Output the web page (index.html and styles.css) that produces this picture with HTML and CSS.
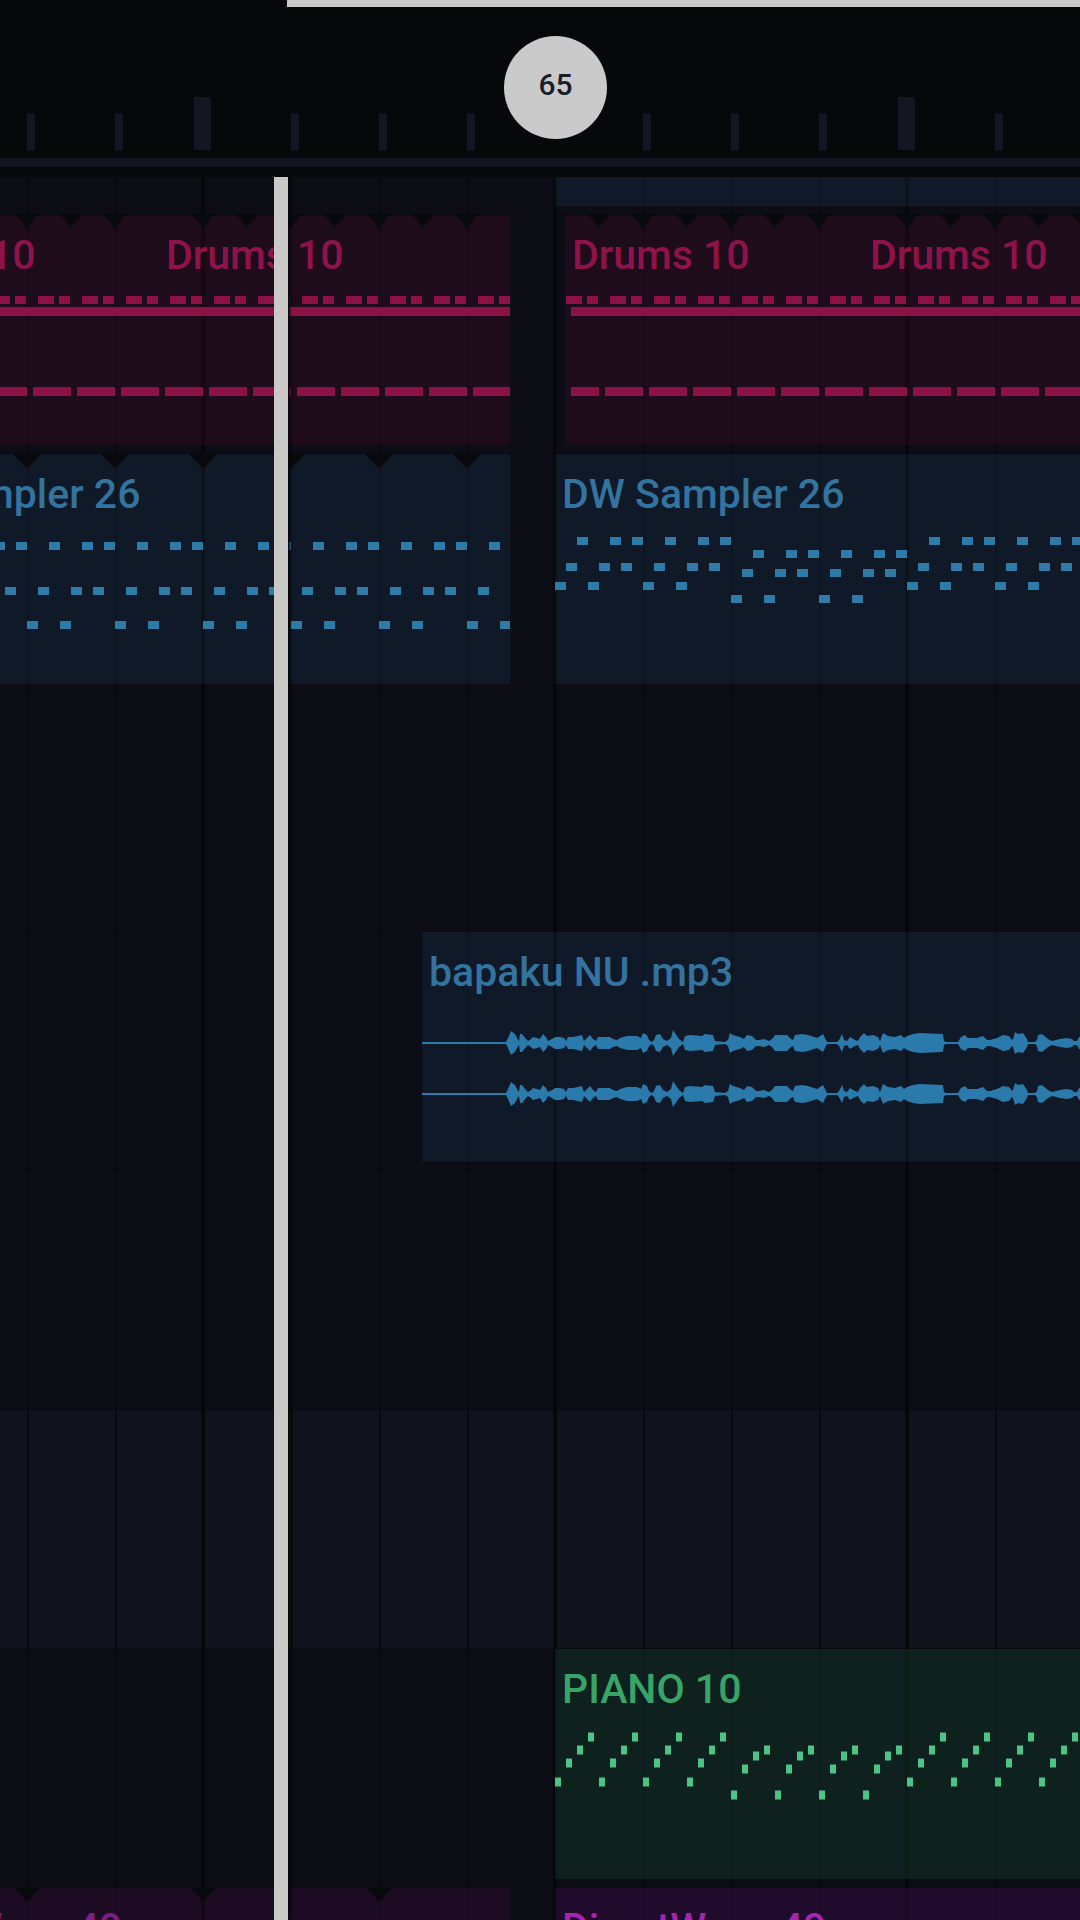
FILE: index.html
```html
<!DOCTYPE html>
<html lang="en">
<head>
    <meta charset="UTF-8">
    <meta name="viewport" content="width=device-width, initial-scale=1.0">
    <title>Playlist</title>

    <link rel="stylesheet" href="styles.css">
</head>
<body>
    <!-- shared note patterns, one beat = 88px, one bar = 352px -->
    <svg class="defs" width="0" height="0" aria-hidden="true">
        <defs>
            <!-- every second bar has a number instead of a tick -->
            <pattern id="tick" x="-149" width="704" height="53" patternUnits="userSpaceOnUse">
                <path class="tick" d="M88 17h8v36h-8zM176 17h8v36h-8zM264 17h8v36h-8zM343 0h17v53h-17zM440 17h8v36h-8zM528 17h8v36h-8zM616 17h8v36h-8z"/>
            </pattern>

            <pattern id="notch-44" x="-22" width="44" height="230" patternUnits="userSpaceOnUse">
                <path class="notch" d="M8 0h28q-6 1-10 8l-4 5-4-5q-4-7-10-8z"/>
            </pattern>
            <pattern id="notch-88" x="-44" width="88" height="230" patternUnits="userSpaceOnUse">
                <path class="notch" d="M30 0h28L44 15z"/>
            </pattern>
            <pattern id="notch-176" x="-88" width="176" height="230" patternUnits="userSpaceOnUse">
                <path class="notch" d="M75 0h26L88 14z"/>
            </pattern>

            <pattern id="drums" width="44" height="230" patternUnits="userSpaceOnUse">
                <path class="fill-drums" d="M11 81h16v8H11zM32 81h11v8H32zM6 172h38v9H6z"/>
            </pattern>
            <pattern id="sampler-a" width="88" height="230" patternUnits="userSpaceOnUse">
                <path class="line-sampler" d="M22 92h11M55 92h11M77 92h11M11 137h11M44 137h11M66 137h11M0 171h11M33 171h11"/>
            </pattern>
            <pattern id="sampler-b" width="352" height="230" patternUnits="userSpaceOnUse">
                <path class="line-sampler" d="M22 87h11M55 87h11M77 87h11M110 87h11M143 87h11M165 87h11
                    M11 113h11M44 113h11M66 113h11M99 113h11M132 113h11M154 113h11
                    M0 132h11M33 132h11M88 132h11M121 132h11
                    M198 100h11M231 100h11M253 100h11M286 100h11M319 100h11M341 100h11
                    M187 119h11M220 119h11M242 119h11M275 119h11M308 119h11M330 119h11
                    M176 145h11M209 145h11M264 145h11M297 145h11"/>
            </pattern>
            <pattern id="piano" width="352" height="230" patternUnits="userSpaceOnUse">
                <path class="line-piano" d="M0 133h6M44 133h6M88 133h6M132 133h6
                    M11 114h6M55 114h6M99 114h6M143 114h6
                    M22 101h6M66 101h6M110 101h6M154 101h6
                    M33 88h6M77 88h6M121 88h6M165 88h6
                    M176 146h6M220 146h6M264 146h6M308 146h6
                    M187 120h6M231 120h6M275 120h6M319 120h6
                    M198 107h6M242 107h6M286 107h6M330 107h6
                    M209 101h6M253 101h6M297 101h6M341 101h6"/>
            </pattern>
        </defs>
    </svg>

    <header class="ruler">
        <div class="loop-range"></div>
        <svg class="ticks" width="100%" height="53" aria-hidden="true">
            <rect width="100%" height="53" fill="url(#tick)"/>
        </svg>
        <button class="marker" type="button">65</button>
    </header>

    <main class="playlist">
        <div class="lane lane-top">
            <div class="clip blue from-bar"></div>
        </div>

        <div class="lane">
            <div class="clip pink earlier loop">
                <span class="name">Drums 10</span>
                <svg class="notes" aria-hidden="true">
                    <rect width="100%" height="230" fill="url(#drums)"/>
                    <rect class="fill-drums" y="92" width="100%" height="9"/>
                    <rect x="22" width="264" height="230" fill="url(#notch-44)"/>
                </svg>
            </div>
            <div class="clip pink loop-cut">
                <span class="name">Drums 10</span>
                <svg class="notes" aria-hidden="true">
                    <rect width="100%" height="230" fill="url(#drums)"/>
                    <rect class="fill-drums" y="92" width="100%" height="9"/>
                    <rect x="22" width="308" height="230" fill="url(#notch-44)"/>
                </svg>
            </div>
            <div class="clip pink trimmed">
                <span class="name">Drums 10</span>
                <svg class="notes" aria-hidden="true">
                    <rect width="100%" height="160" fill="url(#drums)"/>
                    <rect x="16" y="160" width="100%" height="70" fill="url(#drums)"/>
                    <rect class="fill-drums" x="16" y="92" width="100%" height="9"/>
                    <rect x="22" width="264" height="230" fill="url(#notch-44)"/>
                </svg>
            </div>
            <div class="clip pink rest">
                <span class="name">Drums 10</span>
                <svg class="notes" aria-hidden="true">
                    <rect width="100%" height="230" fill="url(#drums)"/>
                    <rect class="fill-drums" y="92" width="100%" height="9"/>
                    <rect x="22" width="100%" height="230" fill="url(#notch-44)"/>
                </svg>
            </div>
        </div>

        <div class="lane">
            <div class="clip blue earlier">
                <span class="name">DW Sampler 26</span>
                <svg class="notes" aria-hidden="true">
                    <rect width="100%" height="230" fill="url(#sampler-a)"/>
                    <rect x="44" width="100%" height="230" fill="url(#notch-88)"/>
                </svg>
            </div>
            <div class="clip blue next-bar">
                <span class="name">DW Sampler 26</span>
                <svg class="notes" aria-hidden="true">
                    <rect width="100%" height="230" fill="url(#sampler-b)"/>
                </svg>
            </div>
        </div>

        <div class="lane"></div>

        <div class="lane">
            <div class="clip blue audio">
                <span class="name">bapaku NU .mp3</span>
                <svg class="notes" aria-hidden="true">
                    <path class="wave" transform="translate(0 111)"/>
                    <path class="wave" transform="translate(0 162)"/>
                </svg>
            </div>
        </div>

        <div class="lane"></div>
        <div class="lane selected"></div>

        <div class="lane">
            <div class="clip green from-bar">
                <span class="name">PIANO 10</span>
                <svg class="notes" aria-hidden="true">
                    <rect width="100%" height="230" fill="url(#piano)"/>
                </svg>
            </div>
        </div>

        <div class="lane">
            <div class="clip purple earlier dim">
                <span class="name">DirectWave 49</span>
                <svg class="notes" aria-hidden="true">
                    <rect x="88" width="100%" height="230" fill="url(#notch-176)"/>
                </svg>
            </div>
            <div class="clip purple next-bar">
                <span class="name">DirectWave 49</span>
                <svg class="notes" aria-hidden="true"></svg>
            </div>
        </div>

        <div class="playhead"></div>
    </main>

    <script>
        // peaks of the audio clip: x, level
        let peaks = [
            [0, 1], [84, 1], [86, 5], [89, 12], [93, 9], [95, 5], [97, 2], [98, 9], [100, 9], [104, 4],
            [106, 2], [109, 4], [111, 6], [115, 5], [118, 4], [121, 9], [124, 6], [126, 2], [130, 4],
            [133, 6], [138, 6], [142, 5], [144, 2], [146, 6], [151, 6], [160, 8], [162, 2], [164, 4],
            [168, 8], [171, 4], [174, 2], [176, 6], [181, 6], [188, 6], [191, 4], [195, 3], [198, 5],
            [205, 7], [215, 7], [219, 5], [221, 10], [225, 8], [227, 3], [230, 1], [232, 3], [234, 8],
            [238, 9], [241, 4], [245, 2], [249, 5], [251, 13], [253, 10], [257, 4], [261, 1], [263, 7],
            [268, 8], [280, 7], [283, 9], [291, 8], [293, 2], [303, 1], [306, 3], [308, 10], [311, 8],
            [318, 6], [322, 4], [325, 8], [330, 7], [334, 3], [337, 3], [342, 4], [347, 2], [350, 4],
            [353, 8], [365, 8], [369, 4], [371, 3], [373, 8], [380, 9], [386, 8], [392, 6], [395, 5],
            [401, 9], [404, 3], [405, 1], [415, 1], [417, 3], [420, 9], [422, 3], [425, 2], [428, 6],
            [433, 3], [436, 2], [438, 6], [442, 10], [445, 7], [451, 8], [456, 6], [458, 2], [461, 10],
            [466, 7], [473, 6], [479, 8], [482, 5], [485, 7], [491, 9], [498, 10], [521, 9], [522, 2],
            [524, 1], [536, 1], [539, 6], [543, 8], [546, 5], [555, 5], [561, 7], [565, 3], [568, 3],
            [575, 5], [581, 8], [587, 7], [590, 3], [591, 4], [593, 11], [596, 9], [601, 10], [605, 4],
            [606, 1], [613, 1], [615, 3], [616, 8], [620, 9], [626, 4], [630, 2], [638, 4], [645, 5],
            [650, 4], [652, 2], [655, 2], [657, 6], [662, 7], [670, 3]
        ];

        let upper = peaks.map(([x, level]) => `${x} ${-level}`);
        let lower = peaks.map(([x, level]) => `${x} ${level}`).reverse();

        for(let wave of document.querySelectorAll('.wave')){
            wave.setAttribute('d', 'M' + upper.concat(lower).join('L') + 'z');
        }
    </script>
</body>
</html>
```
FILE: styles.css
```css
* {
    box-sizing: border-box;
    margin: 0;
    padding: 0;
}
body {
    height: 100vh;
    display: flex;
    flex-direction: column;
    overflow: hidden;
    background-color: #07080a;
    font-family: Roboto, sans-serif;
}
.defs {
    position: absolute;
}
.tick {
    fill: #151624;
}
.notch {
    fill: #08090c;
}
.fill-drums {
    fill: #8c1145;
}
.line-sampler {
    stroke: #2e7aa8;
    stroke-width: 8px;
}
.line-piano {
    stroke: #4bc486;
    stroke-width: 9px;
}
.wave {
    fill: #2a7aab;
}

/* ruler */
.ruler {
    position: relative;
    flex: none;
    padding-bottom: 10px;
}
.loop-range {
    height: 7px;
    margin-left: 287px;
    background-color: #c9cac7;
}
.ticks {
    display: block;
    box-sizing: content-box;
    padding-top: 90px;
    padding-bottom: 8px;
    border-bottom: 9px solid #141423;
}
.marker {
    position: absolute;
    left: 504px;
    top: 36px;
    width: 103px;
    height: 103px;
    padding-bottom: 6px;
    border: none;
    border-radius: 50%;
    background-color: #cacaca;
    color: #1b1d2c;
    font-family: inherit;
    font-size: 30px;
    font-weight: 500;
}

/* lanes */
.playlist {
    position: relative;
    flex: 1;
    overflow: hidden;
    background-color: #0c0d15;
}
.lane {
    display: flex;
    min-height: 239px;
    padding-bottom: 9px;
    box-shadow: inset 0 -1px #08090e;
    background-image:
        repeating-linear-gradient(90deg, #06070a 0 4px, transparent 4px 352px),
        repeating-linear-gradient(90deg, #090a10 0 2px, transparent 2px 88px);
    background-position: -151px 0, -61px 0;
    background-size: calc(100% + 151px) 100%, calc(100% + 61px) 100%;
    background-repeat: no-repeat;
}
.lane-top {
    min-height: 38px;
}
.selected {
    background-color: #11121c;
}

/* clips */
.clip {
    display: grid;
    flex: none;
    overflow: hidden;
}
.clip > * {
    grid-area: 1 / 1;
}
.name {
    position: relative;
    z-index: 1;
    padding: 20px 7px 0;
    font-size: 41px;
    font-weight: 500;
    line-height: 41px;
    white-space: nowrap;
}
.notes {
    display: block;
    width: 100%;
    height: 230px;
}
.blue {
    background-color: rgba(40, 113, 170, .12);
    color: #3273a0;
}
.pink {
    background-color: rgba(162, 5, 71, .12);
    color: #91124a;
}
.green {
    background-color: rgba(45, 180, 104, .12);
    color: #38a467;
}
.purple {
    background-color: rgba(162, 0, 190, .14);
    color: #a326b2;
}
.dim {
    background-color: rgba(162, 0, 150, .11);
    color: #7d1d86;
}
.earlier {
    width: 659px;
    margin-left: -149px;
}
.loop {
    width: 308px;
}
.loop-cut {
    width: 351px;
}
.trimmed {
    width: 298px;
    margin-left: 55px;
}
.trimmed .notes {
    width: 308px;
    margin-left: -10px;
}
.rest {
    flex: 1;
}
.from-bar {
    flex: 1;
    margin-left: 555px;
}
.next-bar {
    flex: 1;
    margin-left: 45px;
}
.audio {
    flex: 1;
    margin-left: 422px;
}

.playhead {
    position: absolute;
    z-index: 2;
    top: 0;
    bottom: 0;
    left: 274px;
    width: 14px;
    background-color: #c9cac7;
    box-shadow: 2px 0 2px #050609;
}
```
